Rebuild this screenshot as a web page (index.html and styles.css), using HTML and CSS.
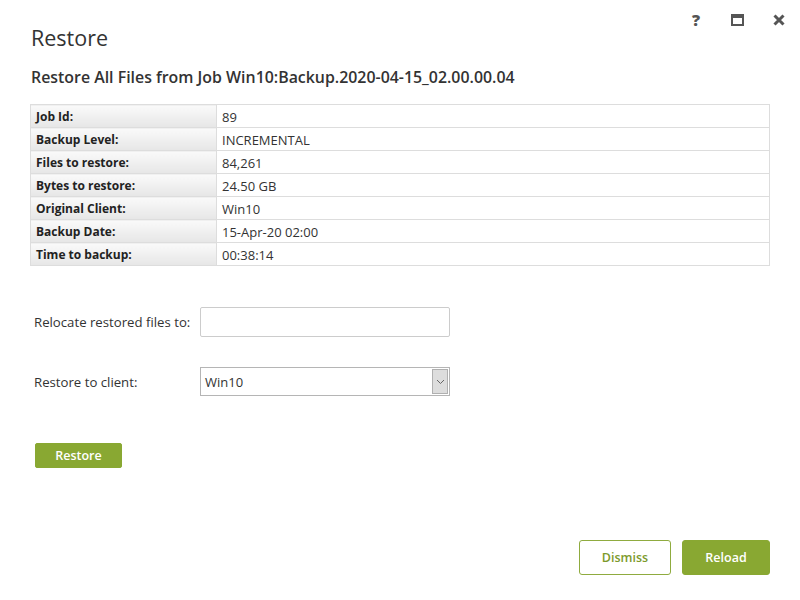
FILE: index.html
```html
<!DOCTYPE html>
<html>
<head>
<meta charset="utf-8">
<link rel="stylesheet" href="styles.css">
</head>
<body>
<div class="dialog">
  <div class="toolbar">
    <span class="tool help">?</span>
    <span class="tool">
      <svg width="13" height="12" viewBox="0 0 13 12"><rect x="1" y="1" width="11" height="10" fill="none" stroke="#555" stroke-width="2"/><rect x="1" y="1" width="11" height="3" fill="#555"/></svg>
    </span>
    <span class="tool">
      <svg width="12" height="12" viewBox="0 0 12 12"><path d="M1.5 1.5 L10.5 10.5 M10.5 1.5 L1.5 10.5" stroke="#555" stroke-width="3" stroke-linecap="butt"/></svg>
    </span>
  </div>
  <h1 class="title">Restore</h1>
  <h2 class="subtitle">Restore All Files from Job Win10:Backup.2020-04-15_02.00.00.04</h2>
  <table class="info">
    <tr><th>Job Id:</th><td>89</td></tr>
    <tr><th>Backup Level:</th><td>INCREMENTAL</td></tr>
    <tr><th>Files to restore:</th><td>84,261</td></tr>
    <tr><th>Bytes to restore:</th><td>24.50 GB</td></tr>
    <tr><th>Original Client:</th><td>Win10</td></tr>
    <tr><th>Backup Date:</th><td>15-Apr-20 02:00</td></tr>
    <tr><th>Time to backup:</th><td>00:38:14</td></tr>
  </table>
  <div class="form">
    <div class="field">
      <label>Relocate restored files to:</label>
      <div class="input"></div>
    </div>
    <div class="field">
      <label>Restore to client:</label>
      <div class="select">
        <span class="sel-val">Win10</span>
        <span class="sel-btn"><svg width="9" height="6" viewBox="0 0 9 6"><path d="M1 1 L4.5 4.5 L8 1" fill="none" stroke="#666" stroke-width="1"/></svg></span>
      </div>
    </div>
  </div>
  <button class="btn primary small">Restore</button>
  <div class="footer">
    <button class="btn outline">Dismiss</button>
    <button class="btn primary">Reload</button>
  </div>
</div>
</body>
</html>
```
FILE: styles.css
```css
html, body { margin: 0; padding: 0; background: #fff; }
body { font-family: "Open Sans", "Liberation Sans", sans-serif; color: #333; width: 800px; height: 600px; overflow: hidden; }
.dialog { position: relative; width: 800px; height: 600px; box-sizing: border-box; padding: 0 30px 0 30px; }
.toolbar { position: absolute; top: 10px; right: 0px; display: flex; }
.tool { width: 42px; height: 20px; display: flex; align-items: center; justify-content: center; color: #555; }
.tool.help { font-weight: 800; font-size: 16px; font-family: "Open Sans", sans-serif; padding-left: 2px; box-sizing: border-box; }
.title { margin: 0; padding-top: 24px; font-size: 21.5px; font-weight: 400; line-height: 28px; color: #333; padding-left: 1px; }
.subtitle { margin: 0; margin-top: 14px; font-size: 15.9px; font-weight: 600; line-height: 22px; color: #333; padding-left: 1px; }
.info { margin-top: 16px; width: 740px; border-collapse: collapse; font-size: 13px; }
.info th, .info td { border: 1px solid #ddd; height: 23px; padding: 0 5px; box-sizing: border-box; }
.info th { width: 186px; text-align: left; font-weight: 700; font-size: 12px; background: linear-gradient(#fafafa, #e6e6e6); color: #222; }
.info td { background: #fff; padding-top: 2px; }
.form { margin-top: 41px; padding-left: 4px; }
.field { display: flex; align-items: center; margin-bottom: 30px; }
.field label { width: 166px; font-size: 13.2px; color: #333; }
.input { width: 248px; height: 28px; border: 1px solid #ccc; border-radius: 2px; background: #fff; }
.select { width: 248px; height: 27px; border: 1px solid #b5b5b5; display: flex; align-items: center; background: #fff; }
.sel-val { flex: 1; padding-left: 4px; font-size: 13px; }
.sel-btn { width: 16px; height: 25px; margin-right: 1px; border: 1px solid #b0b0b0; background: #ddd; display: flex; align-items: center; justify-content: center; box-sizing: border-box; }
.btn { font-family: "Open Sans", "Liberation Sans", sans-serif; font-weight: 600; font-size: 12.5px; border-radius: 3px; cursor: pointer; box-sizing: border-box; }
.btn.primary { background: #89a832; color: #fff; border: 1px solid #89a832; }
.btn.outline { background: #fff; color: #7d9a2c; border: 1px solid #8fab3f; }
.btn.small { margin-top: 17px; margin-left: 5px; width: 87px; height: 25px; border-radius: 2px; padding: 0; }
.footer { position: absolute; right: 30px; bottom: 25px; display: flex; gap: 11px; }
.footer .btn { height: 35px; width: 88px; }
.footer .outline { width: 92px; }
```
